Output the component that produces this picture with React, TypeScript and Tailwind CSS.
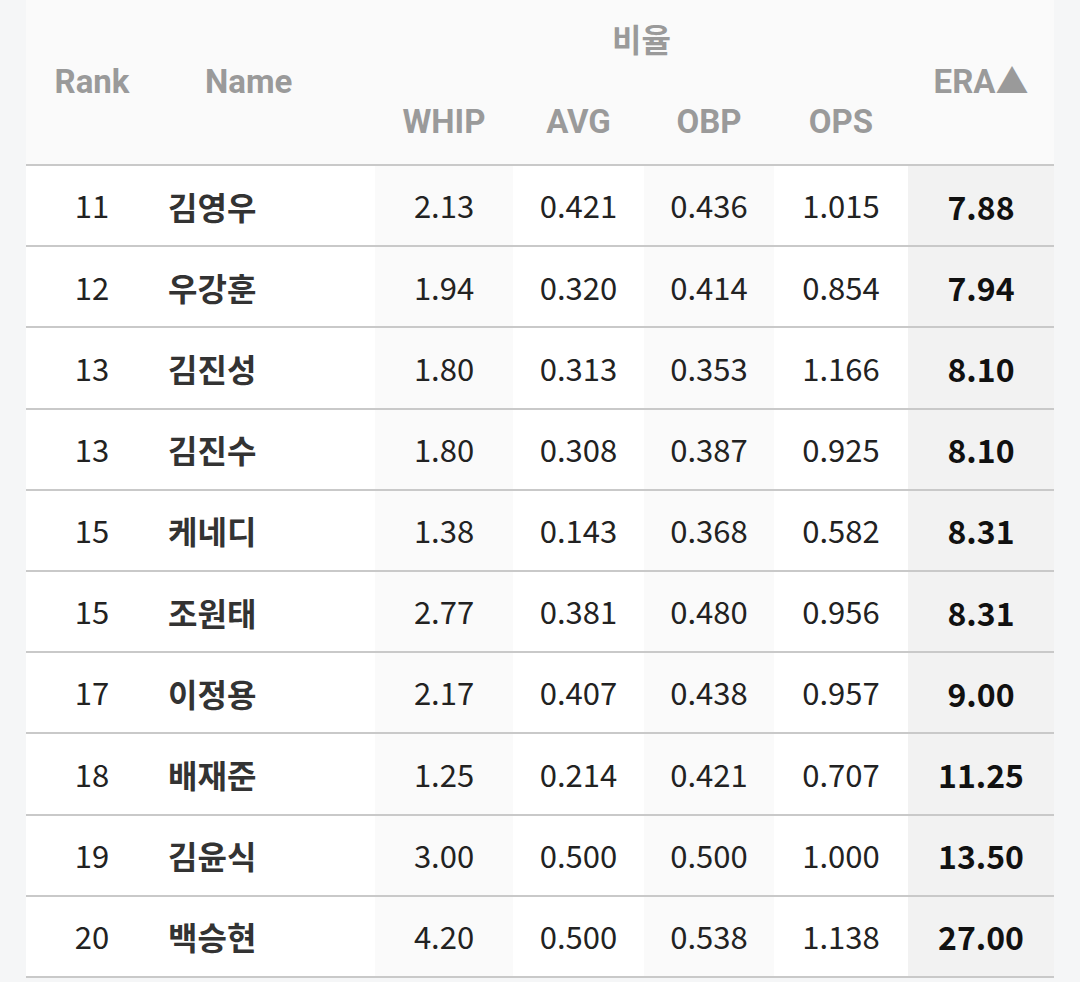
const rows = [
  { rank: 11, name: "김영우", whip: "2.13", avg: "0.421", obp: "0.436", ops: "1.015", era: "7.88" },
  { rank: 12, name: "우강훈", whip: "1.94", avg: "0.320", obp: "0.414", ops: "0.854", era: "7.94" },
  { rank: 13, name: "김진성", whip: "1.80", avg: "0.313", obp: "0.353", ops: "1.166", era: "8.10" },
  { rank: 13, name: "김진수", whip: "1.80", avg: "0.308", obp: "0.387", ops: "0.925", era: "8.10" },
  { rank: 15, name: "케네디", whip: "1.38", avg: "0.143", obp: "0.368", ops: "0.582", era: "8.31" },
  { rank: 15, name: "조원태", whip: "2.77", avg: "0.381", obp: "0.480", ops: "0.956", era: "8.31" },
  { rank: 17, name: "이정용", whip: "2.17", avg: "0.407", obp: "0.438", ops: "0.957", era: "9.00" },
  { rank: 18, name: "배재준", whip: "1.25", avg: "0.214", obp: "0.421", ops: "0.707", era: "11.25" },
  { rank: 19, name: "김윤식", whip: "3.00", avg: "0.500", obp: "0.500", ops: "1.000", era: "13.50" },
  { rank: 20, name: "백승현", whip: "4.20", avg: "0.500", obp: "0.538", ops: "1.138", era: "27.00" },
];

const cols = "grid grid-cols-[132px_217px_138px_131px_130px_134px_146px]";
const head = "font-['Roboto','Noto_Sans_CJK_KR',sans-serif] font-bold text-[33px] text-[#9a9a9a]";
const num = "font-['Noto_Sans_CJK_KR','Noto_Sans',sans-serif] text-[31px] text-[#222]";

export default function App() {
  return (
    <div className="min-h-screen bg-[#f5f6f7] px-[26px]">
      <div className="w-full">
        <div className={`${cols} grid-rows-[76px_88px] h-[166px] bg-[#fafafa] border-b-2 border-[#c9c9c9] ${head}`}>
          <div className="row-span-2 flex items-center justify-center">Rank</div>
          <div className="row-span-2 flex items-center pl-[47px]">Name</div>
          <div className="col-span-4 flex items-center justify-center font-['Noto_Sans_CJK_KR',sans-serif] text-[32px]">비율</div>
          <div className="row-span-2 flex items-center justify-center">ERA▲</div>
          <div className="flex items-center justify-center pt-[4px]">WHIP</div>
          <div className="flex items-center justify-center pt-[4px]">AVG</div>
          <div className="flex items-center justify-center pt-[4px]">OBP</div>
          <div className="flex items-center justify-center pt-[4px]">OPS</div>
        </div>
        {rows.map((r, i) => (
          <div key={i} className={`${cols} h-[81.2px] bg-white border-b-2 border-[#c9c9c9] ${num}`}>
            <div className="flex items-center justify-center">{r.rank}</div>
            <div className="flex items-center pl-[10px] font-bold text-[32px] text-[#333]">{r.name}</div>
            <div className="flex items-center justify-center bg-[#fafafa]">{r.whip}</div>
            <div className="flex items-center justify-center">{r.avg}</div>
            <div className="flex items-center justify-center bg-[#fafafa]">{r.obp}</div>
            <div className="flex items-center justify-center">{r.ops}</div>
            <div className="flex items-center justify-center bg-[#f2f2f2] font-bold text-[32px] text-[#111]">{r.era}</div>
          </div>
        ))}
      </div>
    </div>
  );
}
